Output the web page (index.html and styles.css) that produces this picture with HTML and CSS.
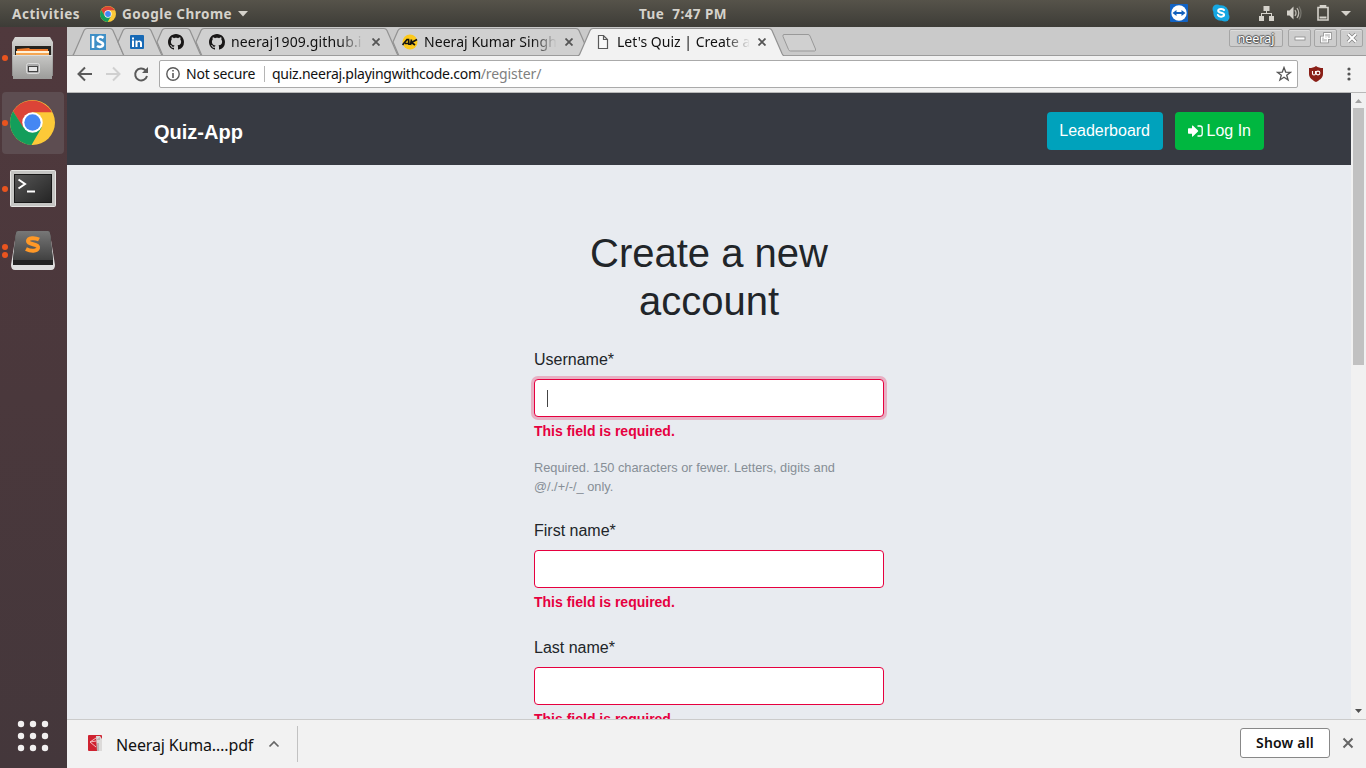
FILE: index.html
```html
<!DOCTYPE html>
<html lang="en">
<head>
<meta charset="utf-8">
<title>Let's Quiz | Create a new account</title>
<link rel="stylesheet" href="styles.css">
</head>
<body>
<svg class="defs" width="0" height="0" aria-hidden="true">
  <defs>
    <linearGradient id="cabinet" x2="0" y2="1"><stop stop-color="#d7d7d5"/><stop offset="1" stop-color="#8c8c8a"/></linearGradient>
    <linearGradient id="drawer" x2="0" y2="1"><stop stop-color="#c7c7c5"/><stop offset="1" stop-color="#9c9c9a"/></linearGradient>
    <linearGradient id="screen" x2="1" y2="1"><stop stop-color="#555"/><stop offset="1" stop-color="#252525"/></linearGradient>
    <linearGradient id="key" x2="0" y2="1"><stop stop-color="#777"/><stop offset="1" stop-color="#414141"/></linearGradient>
    <symbol id="chrome" viewBox="0 0 44 44">
      <circle cx="22" cy="22" r="22" fill="#fcc938"/>
      <path d="M3 11A22 22 0 0 1 41 12H22L12.500 27Z" fill="#dc4437"/>
      <path d="M3 11A22 22 0 0 0 21 44L31 27L22 22L13 27Z" fill="#139e5b"/>
      <circle cx="22" cy="22" r="10" fill="#fff"/><circle cx="22" cy="22" r="8" fill="#4587f3"/>
    </symbol>
    <symbol id="octocat" viewBox="0 0 16 16">
      <path fill="#191717" d="M8 0C3.580 0 0 3.580 0 8c0 3.540 2.290 6.530 5.470 7.590.4.070.55-.17.55-.38 0-.19-.01-.82-.01-1.490-2.010.37-2.530-.49-2.690-.94-.09-.23-.48-.94-.82-1.130-.28-.15-.68-.52-.01-.53.63-.01 1.080.58 1.230.82.72 1.210 1.870.87 2.330.66.07-.52.28-.87.51-1.070-1.780-.2-3.640-.89-3.640-3.950 0-.87.31-1.590.82-2.150-.08-.2-.36-1.020.08-2.120 0 0 .67-.21 2.200.82.64-.18 1.320-.27 2-.27s1.360.09 2 .27c1.530-1.040 2.200-.82 2.200-.82.44 1.100.16 1.920.08 2.120.51.56.82 1.270.82 2.150 0 3.070-1.870 3.750-3.650 3.950.29.25.54.73.54 1.480 0 1.070-.01 1.930-.01 2.200 0 .21.15.46.55.38A8 8 0 0 0 16 8c0-4.420-3.580-8-8-8Z"/>
    </symbol>
  </defs>
</svg>

<header class="topbar">
  <span class="activities">Activities</span>
  <span class="app-menu"><svg width="16" height="16"><use href="#chrome"/></svg><span class="app-name">Google Chrome</span><svg width="10" height="6"><path d="M0 0h10L5 5.500Z" fill="#d5d2cb"/></svg></span>
  <span class="clock">Tue&nbsp; 7:47 PM</span>
  <span class="indicators">
    <svg width="196" height="27" viewBox="1170 0 196 27">
      <rect x="1170" y="4" width="18" height="18" rx="1" fill="#1263c4"/><circle cx="1179" cy="13" r="7.700" fill="#fff"/>
      <path d="M1172.500 13l4-3v2h5v-2l4 3-4 3v-2h-5v2Z" fill="#1260bd"/>
      <circle cx="1221" cy="13" r="7.700" fill="#16a7e2"/><circle cx="1217" cy="9" r="4.500" fill="#16a7e2"/><circle cx="1225" cy="17" r="4.500" fill="#16a7e2"/>
      <path d="M1224 10c-.7-1.500-5.700-1.600-5.800.7-.1 2.700 5.900 1.400 5.900 4.100 0 2.300-5.300 2.600-6.200.2" fill="none" stroke="#fff" stroke-width="2" stroke-linecap="round"/>
      <path d="M1263.500 6h6v5h-6zM1259 16h5v5h-5zM1269 16h5v5h-5zM1266 11h1v2h5v3h-1v-2h-9v2h-1v-3h5z" fill="#d5d2cb"/>
      <path d="M1287 10.500h2.500l4-4v13l-4-4h-2.500z" fill="#d5d2cb"/>
      <path d="M1295 10q2 3 0 6M1297 8q3.500 5 0 10" fill="none" stroke="#bbb8b0" stroke-width="1.300"/><path d="M1299 6.500q4 6.500 0 13" fill="none" stroke="#77756e" stroke-width="1.300"/>
      <path d="M1320.500 7h5V5.800h-5zM1318 7.500h10v12.500h-10z" fill="none" stroke="#d5d2cb" stroke-width="1.600"/><path d="M1319.500 16.500h7v2h-7z" fill="#d5d2cb"/>
      <path d="M1341 11h10l-5 5z" fill="#d5d2cb"/>
    </svg>
  </span>
</header>

<div class="desktop">
  <nav class="dock">
    <div class="dock-item files"><i class="dot"></i>
      <svg width="46" height="48" viewBox="0 0 46 48"><path d="M5 2h35l3 5v34H2V7Z" fill="url(#cabinet)"/><path d="M5 11h36v11H5Z" fill="#24231f"/><path d="M7 14l12-1 1 1h18v8H7Z" fill="#ed7a2b"/><path d="M6 16h33v2H6Z" fill="#fff1d9"/><path d="M6 18h33v3H6Z" fill="#f4a653"/><path d="M3 20h39v24H3Z" fill="url(#drawer)"/><path d="M3 20.500h39" stroke="#ddd"/><rect x="16.500" y="28.500" width="13" height="10" rx="2" fill="#aaa" stroke="#ddd"/><rect x="18.500" y="31.500" width="9" height="5" fill="#e6e6e6" stroke="#444"/></svg>
    </div>
    <div class="dock-item active"><i class="dot"></i><svg width="45" height="45"><use href="#chrome"/></svg></div>
    <div class="dock-item terminal"><i class="dot"></i>
      <svg width="46" height="38" viewBox="0 0 46 38"><rect x=".5" y=".5" width="45" height="36" rx="1" fill="#c5c5c3" stroke="#e6e6e4"/><rect x="4" y="4" width="38" height="29" fill="#181818"/><rect x="5" y="5" width="36" height="27" fill="url(#screen)"/><path d="M8.500 9.500l6.500 4.500-6.500 4.500" fill="none" stroke="#fff" stroke-width="2"/><path d="M17 21.500h8" stroke="#fff" stroke-width="2"/></svg>
    </div>
    <div class="dock-item sublime"><i class="dot double"></i>
      <svg width="46" height="42" viewBox="0 0 46 42"><path d="M6 4h34l5 31q0 5-4 5H5q-4 0-4-5Z" fill="#dedede"/><path d="M8 1h30q2 0 2 2l3 27v5H3v-5L6 3q0-2 2-2Z" fill="#222"/><path d="M8 1h30q2 0 2 2l3 27H3L6 3q0-2 2-2Z" fill="url(#key)"/><path d="M29 9.500c-4-2-11-2-11 1.500 0 4.500 11 2 10 7-1 3.500-7 3.500-12 1" fill="none" stroke="#ff9827" stroke-width="4"/></svg>
    </div>
    <svg class="apps" width="32" height="32" viewBox="0 0 32 32" fill="#f2f0f0"><circle cx="4" cy="4" r="3.200"/><circle cx="16" cy="4" r="3.200"/><circle cx="28" cy="4" r="3.200"/><circle cx="4" cy="16" r="3.200"/><circle cx="16" cy="16" r="3.200"/><circle cx="28" cy="16" r="3.200"/><circle cx="4" cy="28" r="3.200"/><circle cx="16" cy="28" r="3.200"/><circle cx="28" cy="28" r="3.200"/></svg>
  </nav>

  <main class="window">
    <div class="tabstrip">
      <svg class="tab-shapes" width="1299" height="29" viewBox="67 27 1299 29">
        <g fill="#d0d0d0" stroke="#929292" stroke-width="1.200">
          <path d="M72 56q1.500-1 2-2.500l10-23q1-2 3-2h23q2 0 3 2l10 23q1 2 2 2.500"/>
          <path d="M118 42l5-11.500q1-2 3-2h22q2 0 3 2l10 23q1 2 2 2.500H124Z"/>
          <path d="M157 42l5-11.500q1-2 3-2h22q2 0 3 2l10 23q1 2 2 2.500H163Z"/>
          <path d="M196 42l5-11.500q1-2 3-2h180q2 0 3 2l10 23q1 2 2 2.500H202Z"/>
          <path d="M393 42l5-11.500q1-2 3-2h175q2 0 3 2l10 23q1 2 2 2.500H399Z"/>
        </g>
        <path d="M67 55.500h512M784 55.500h582" stroke="#9c9c9c"/>
        <path d="M578 56q1.500-1 2-2.500l10-23q1-2 3-2h176q2 0 3 2l10 23q1 2 2 2.500" fill="#f2f2f2" stroke="#929292" stroke-width="1.200"/>
        <path d="M784 34.500h24q1.500 0 2 1.500l5.500 13q.5 2-1 2h-24q-1.500 0-2-1.500l-5.500-13q-.5-2 1-2Z" fill="#d0d0d0" stroke="#999"/>
      </svg>
      <svg class="fav f1" width="16" height="16" viewBox="0 0 16 16"><path d="M0 0h16v16H0Z" fill="#3f8fc6"/><path d="M3 2v12M13.500 3.800C10 1.800 7.500 3 7.500 5c0 3.500 5.500 2.500 5.500 5.500 0 2.500-4 3-6 1.500" fill="none" stroke="#fff" stroke-width="2.600"/></svg>
      <svg class="fav f2" width="14" height="14" viewBox="0 0 14 14"><rect width="14" height="14" rx="1" fill="#1769b5"/><path d="M2 5.500h2V12H2zM2 2.500h2v2H2zM5.500 5.500h1.900v1c1.100-1.800 4.600-1.500 4.600 1.500v4h-2V8.500c0-2-2.500-1.800-2.500 0V12h-2z" fill="#fff"/></svg>
      <svg class="fav f3" width="16" height="16"><use href="#octocat"/></svg>
      <div class="tab t4"><svg width="16" height="16"><use href="#octocat"/></svg><span class="tab-title gh">neeraj1909.github.i</span><svg class="x" width="8" height="8" viewBox="0 0 8 8"><path d="M.5.5l7 7m0-7l-7 7"/></svg></div>
      <div class="tab t5"><svg width="16" height="16" viewBox="0 0 16 16"><circle cx="8" cy="8" r="7.500" fill="#fcc91c"/><path d="M.5 11L5 5.500h1.500L7 11M3 9.500h4M9.500 5.500L8.500 11M15 5.500L9.500 8.500 13 11" fill="none" stroke="#111" stroke-width="1.700"/></svg><span class="tab-title ak">Neeraj Kumar Singh</span><svg class="x" width="8" height="8" viewBox="0 0 8 8"><path d="M.5.5l7 7m0-7l-7 7"/></svg></div>
      <div class="tab t6"><svg width="16" height="16" viewBox="0 0 16 16"><path d="M3.500 1.500h5l4 4v9h-9ZM8.500 1.500v4h4" fill="#f9f9f9" stroke="#5a5a5a" stroke-width="1.200"/></svg><span class="tab-title quiz">Let's Quiz | Create a</span><svg class="x" width="8" height="8" viewBox="0 0 8 8"><path d="M.5.5l7 7m0-7l-7 7"/></svg></div>
      <div class="window-controls"><span class="user">neeraj</span>
        <span class="control"><svg width="12" height="12"><rect x="1" y="5" width="10" height="3" fill="#fff" stroke="#888" stroke-width=".8"/></svg></span>
        <span class="control"><svg width="12" height="12"><path d="M4.500 1.500h6v5h-6zM1.500 5h6v5h-6z" fill="#ccc" stroke="#888" stroke-width="2.600"/><path d="M4.500 1.500h6v5h-6zM1.500 5h6v5h-6z" fill="#ccc" stroke="#fff" stroke-width="1.200"/></svg></span>
        <span class="control"><svg width="12" height="12"><path d="M2 2l8 8m0-8l-8 8" stroke="#858585" stroke-width="3.600"/><path d="M2 2l8 8m0-8l-8 8" stroke="#fff" stroke-width="2"/></svg></span>
      </div>
    </div>

    <div class="toolbar">
      <svg class="nav-icons" width="76" height="18" viewBox="0 0 76 18" fill="none" stroke-width="2"><path d="M15 9H2.500M8 2.500L1.500 9 8 15.500" stroke="#5a5a5a"/><path d="M29 9h12.500M36 2.500L42.500 9 36 15.500" stroke="#d0d0d0"/><path d="M68.500 5.200A6 6 0 1 0 70 11" stroke="#5a5a5a"/><path d="M71 2v6h-6Z" fill="#5a5a5a"/></svg>
      <div class="omnibox">
        <svg width="14" height="14" viewBox="0 0 14 14"><circle cx="7" cy="7" r="6.200" fill="none" stroke="#5a5a5a" stroke-width="1.400"/><path d="M6.200 6h1.600v5H6.200zM6.200 3h1.600v1.600H6.200z" fill="#5a5a5a"/></svg>
        <span class="secure">Not secure</span><i class="separator"></i><span class="url">quiz.neeraj.playingwithcode.com<span class="path">/register/</span></span>
        <svg class="star" width="16" height="16" viewBox="0 0 16 16"><path d="M8 1.500l1.700 4.600 4.800.2-3.800 3 1.400 4.700L8 11.300 3.900 14l1.400-4.700-3.800-3 4.800-.2Z" fill="none" stroke="#555" stroke-width="1.300"/></svg>
      </div>
      <svg class="shield" width="14" height="16" viewBox="0 0 14 16"><path d="M7 0c2 1.500 4 2 7 2v6c0 4-4 6.500-7 8-3-1.500-7-4-7-8V2c3 0 5-.5 7-2Z" fill="#8a1f17"/><path d="M3.500 5v2.500q0 1.500 1.500 1.500t1.500-1.500V5" fill="none" stroke="#fff" stroke-width="1.100"/><circle cx="9" cy="7" r="1.900" fill="none" stroke="#fff" stroke-width="1.100"/></svg>
      <svg class="kebab" width="4" height="14" fill="#555"><circle cx="2" cy="2" r="1.600"/><circle cx="2" cy="7" r="1.600"/><circle cx="2" cy="12" r="1.600"/></svg>
    </div>

    <div class="viewport">
      <div class="page">
        <header class="navbar"><span class="brand">Quiz-App</span>
          <a class="btn info">Leaderboard</a>
          <a class="btn success"><svg width="15" height="12" viewBox="0 0 15 12"><path d="M0 4q0-.7.7-.7H4V1q0-1 .8-.4L10 5.500q.4.500 0 1L4.800 11.400Q4 12 4 11V8.700H.7Q0 8.700 0 8Z" fill="#fff"/><path d="M9.500 1H12q2.200 0 2.200 2.200v5.600Q14.200 11 12 11H9.500" fill="none" stroke="#fff" stroke-width="1.300"/></svg>Log In</a>
        </header>
        <form class="register">
          <h1>Create a new account</h1>
          <div class="field"><label>Username*</label><div class="input focused"><i class="caret"></i></div><strong>This field is required.</strong><small>Required. 150 characters or fewer. Letters, digits and @/./+/-/_ only.</small></div>
          <div class="field"><label>First name*</label><div class="input"></div><strong>This field is required.</strong></div>
          <div class="field"><label>Last name*</label><div class="input"></div><strong>This field is required.</strong></div>
        </form>
      </div>
      <div class="scrollbar"><svg width="15" height="15"><path d="M4 10l3.500-4 3.500 4Z" fill="#a2a2a2"/></svg><i class="thumb"></i><svg width="15" height="15"><path d="M4 5h7l-3.500 4Z" fill="#505050"/></svg></div>
    </div>

    <footer class="downloads">
      <svg class="pdf" width="15" height="17" viewBox="0 0 15 17"><rect width="14" height="16" rx="1" fill="#cf2331"/><path d="M8 1h4l2 3v12H9Z" fill="#dcdad9"/><path d="M8 5l4-3v3ZM9 8h2v8H9Z" fill="#b9b4b4"/><path d="M8 3L2 7l6 5M2 7l6-1" fill="none" stroke="#f4bdc1"/></svg>
      <span class="filename">Neeraj Kuma….pdf</span>
      <svg class="chevron" width="12" height="8"><path d="M1.500 6.500L6 2l4.500 4.500" fill="none" stroke="#666" stroke-width="1.700"/></svg>
      <i class="rule"></i>
      <span class="show-all">Show all</span>
      <svg class="dismiss" width="12" height="12"><path d="M1.500 1.500l9 9m0-9l-9 9" stroke="#666" stroke-width="2"/></svg>
    </footer>
  </main>
</div>
</body>
</html>
```
FILE: styles.css
```css
* { box-sizing: border-box; }
body { margin: 0; width: 1366px; height: 768px; overflow: hidden; display: flex; flex-direction: column; font: 14px/18px "Noto Sans", "Open Sans", sans-serif; color: #111; }
svg { display: block; flex-shrink: 0; }
.defs { position: absolute; }

.topbar { height: 27px; flex: none; display: grid; grid-template-columns: 88px 540px 110px 432px 196px; align-items: center; background: linear-gradient(#56534a, #3d3c37); color: #d5d2cb; font-size: 13.5px; font-weight: 700; white-space: nowrap; }
.activities { padding-left: 12px; letter-spacing: .55px; }
.app-menu { padding-left: 12px; display: flex; align-items: center; gap: 6px; }
.app-name { width: 110px; letter-spacing: .5px; }
.clock { padding-left: 11px; letter-spacing: .45px; }
.indicators { grid-column: 5; }

.desktop { flex: 1; min-height: 0; display: flex; }
.dock { width: 67px; flex: none; padding: 0 2px 16px; display: flex; flex-direction: column; background: linear-gradient(#50393d, #44373b); }
.dock-item { position: relative; width: 62px; height: 62px; flex: none; display: grid; place-items: center; border-radius: 4px; }
.files { padding-top: 2px; }
.active { margin-top: 3px; background: #5d4d51; }
.active svg { margin-right: 1px; margin-top: -1px; }
.terminal { margin-top: 6px; height: 58px; }
.sublime { margin-top: 2px; }
.dot { position: absolute; left: 0; top: 50%; margin-top: -3px; width: 6px; height: 6px; border-radius: 50%; background: #e9541f; }
.double { margin-top: -7px; box-shadow: 0 8px #e9541f; }
.apps { margin: auto 0 0 15px; }

.window { flex: 1; min-width: 0; display: flex; flex-direction: column; background: #f2f2f2; }
.tabstrip { position: relative; height: 29px; flex: none; display: flex; align-items: center; background: #cacaca; }
.tab-shapes { position: absolute; left: 0; top: 0; }
.fav, .tab, .window-controls { position: relative; }
.f1 { margin-left: 23px; }
.f2 { margin-left: 24px; }
.f3 { margin-left: 24px; }
.tab { display: flex; align-items: center; }
.t4 { margin-left: 25px; }
.t5 { margin-left: 22px; }
.t6 { margin-left: 22px; }
.tab-title { width: 133px; height: 18px; margin-left: 6px; overflow: hidden; white-space: nowrap; font-size: 14px; -webkit-mask-image: linear-gradient(90deg, #000 108px, transparent 133px); mask-image: linear-gradient(90deg, #000 108px, transparent 133px); }
.gh { letter-spacing: .15px; }
.ak { letter-spacing: .05px; }
.quiz { letter-spacing: .02px; }
.x { margin-left: 8px; stroke: #555; stroke-width: 1.800; }
.window-controls { margin: -7px 3px 0 auto; display: flex; gap: 3px; }
.user, .control { height: 18px; border: 1px solid #a5a5a5; border-radius: 2px; background: #cdcdcd; display: grid; place-items: center; box-shadow: inset 0 1px #ddd; }
.user { width: 54px; margin-right: 2px; font-size: 12.500px; line-height: 15px; color: #fff; text-shadow: 1px 0 1px #555, -1px 0 1px #555, 0 1px 1px #555, 0 -1px 1px #555; }
.control { width: 23px; }

.toolbar { height: 37px; flex: none; display: flex; align-items: center; border-bottom: 1px solid #b8b8b8; }
.nav-icons { margin-left: 10px; }
.omnibox { width: 1139px; height: 28px; margin-left: 6px; padding: 0 5px 0 6px; display: flex; align-items: center; border: 1px solid #aaa; border-radius: 2px; background: #fff; font-size: 14px; white-space: nowrap; }
.secure { width: 72px; margin-left: 6px; letter-spacing: -.2px; }
.separator { width: 1px; height: 16px; margin: 0 7px 0 6px; background: #b5b5b5; }
.url { letter-spacing: -.25px; }
.path { color: #808080; letter-spacing: -.1px; }
.star { margin-left: auto; }
.shield { margin-left: 11px; }
.kebab { margin-left: 24px; }

.viewport { height: 626px; flex: none; display: flex; overflow: hidden; }
.page { width: 1284px; overflow: hidden; background: #e8ebf0; color: #212529; font: 16px/24px "Liberation Sans", Arial, sans-serif; }
.navbar { height: 72px; padding: 4px 87px 0; display: flex; align-items: center; background: #373a42; color: #fff; }
.brand { margin-right: auto; padding-top: 2px; font-size: 20px; font-weight: 700; }
.btn { height: 38px; padding: 0 13px; display: flex; align-items: center; gap: 4px; border-radius: 4px; }
.info { padding: 0 12.500px; background: #00a2bc; }
.success { margin-left: 12px; background: #00b740; }
.register { width: 350px; margin: 64px 0 0 467px; }
h1 { margin: 0 0 23px; font-size: 40px; line-height: 48px; font-weight: 400; text-align: center; }
.field { display: flex; flex-direction: column; margin-bottom: 22px; }
.input { height: 38px; margin: 7px 0 4px; padding: 10px 12px; border: 1px solid #e6003f; border-radius: 4px; background: #fff; }
.field + .field { padding-top: 1px; margin-top: -.4px; }
.field + .field + .field { margin-top: -1px; }
.focused { box-shadow: 0 0 0 3px rgba(230, 0, 63, .25); }
.caret { display: block; width: 1px; height: 17px; background: #444; }
strong { font-size: 14px; line-height: 21px; color: #e6003f; }
small { margin-top: 16px; font-size: 12.800px; line-height: 19.200px; color: #868e96; }
.field + .field strong { margin-bottom: 1px; }
.scrollbar { width: 15px; display: flex; flex-direction: column; background: #f1f1f1; }
.thumb { width: 11px; height: 257px; margin: 0 auto auto 2px; background: #c1c1c1; }

.downloads { flex: 1; display: flex; align-items: center; border-top: 1px solid #cbcbcb; background: #f2f2f2; }
.pdf { margin: -2px 0 0 21px; }
.filename { width: 139px; margin: 1px 0 0 13px; font-size: 16px; white-space: nowrap; letter-spacing: -.15px; }
.chevron { margin-left: 13px; }
.rule { width: 1px; height: 36px; margin-left: 17px; background: #c2c2c2; }
.show-all { width: 90px; height: 30px; margin: -2px 0 0 auto; border: 1px solid #888; border-radius: 3px; background: #fff; line-height: 27px; text-align: center; font-weight: 600; letter-spacing: .2px; }
.dismiss { margin: -2px 12px 0; }
```
